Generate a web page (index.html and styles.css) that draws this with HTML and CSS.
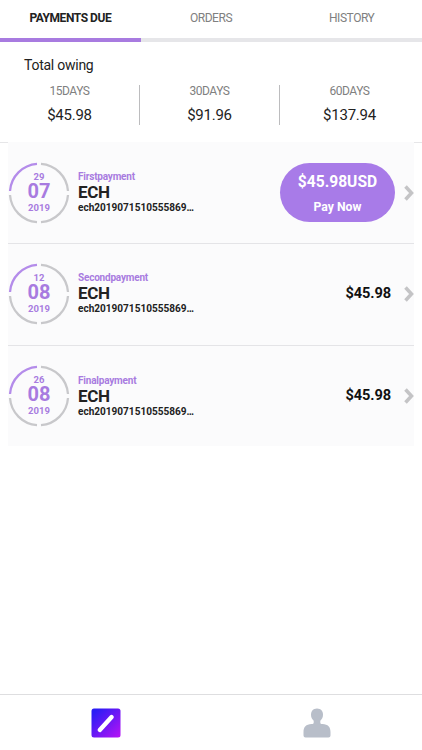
FILE: index.html
```html
<!DOCTYPE html>
<html lang="en">
<head>
    <meta charset="UTF-8">
    <meta name="viewport" content="width=device-width, initial-scale=1.0">
    <title>Payments</title>
    <link rel="stylesheet" href="styles.css">
</head>
<body>
    <nav class="tabs">
        <a class="tab active"><span>PAYMENTS DUE</span></a>
        <a class="tab"><span>ORDERS</span></a>
        <a class="tab"><span>HISTORY</span></a>
    </nav>

    <section class="owing">
        <h2>Total owing</h2>
        <div class="totals">
            <div class="total"><span class="days">15DAYS</span><span class="sum">$45.98</span></div>
            <div class="total"><span class="days">30DAYS</span><span class="sum">$91.96</span></div>
            <div class="total"><span class="days">60DAYS</span><span class="sum">$137.94</span></div>
        </div>
    </section>

    <main class="payments">
        <div class="payment">
            <div class="date">
                <svg class="ring" viewBox="0 0 62 62">
                    <path class="arc on" d="M2 29A29.2 29.2 0 0 1 29 1.9"/>
                    <path class="arc" d="M33 1.9A29.2 29.2 0 0 1 60 29M60 33A29.2 29.2 0 0 1 33 60.1M29 60.1A29.2 29.2 0 0 1 2 33"/>
                </svg>
                <span class="day">29</span>
                <span class="month">07</span>
                <span class="year">2019</span>
            </div>
            <div class="info">
                <span class="type">Firstpayment</span>
                <span class="shop">ECH</span>
                <span class="order">ech2019071510555869…</span>
            </div>
            <button class="pay"><span class="pay-sum">$45.98USD</span><span class="pay-now">Pay Now</span></button>
            <svg class="chevron" viewBox="0 0 10 16"><path d="M1.5 1.5L7.5 8L1.5 14.5"/></svg>
        </div>
        <div class="payment">
            <div class="date">
                <svg class="ring" viewBox="0 0 62 62">
                    <path class="arc on" d="M2 29A29.2 29.2 0 0 1 29 1.9"/>
                    <path class="arc" d="M33 1.9A29.2 29.2 0 0 1 60 29M60 33A29.2 29.2 0 0 1 33 60.1M29 60.1A29.2 29.2 0 0 1 2 33"/>
                </svg>
                <span class="day">12</span>
                <span class="month">08</span>
                <span class="year">2019</span>
            </div>
            <div class="info">
                <span class="type">Secondpayment</span>
                <span class="shop">ECH</span>
                <span class="order">ech2019071510555869…</span>
            </div>
            <span class="amount">$45.98</span>
            <svg class="chevron" viewBox="0 0 10 16"><path d="M1.5 1.5L7.5 8L1.5 14.5"/></svg>
        </div>
        <div class="payment">
            <div class="date">
                <svg class="ring" viewBox="0 0 62 62">
                    <path class="arc on" d="M2 29A29.2 29.2 0 0 1 29 1.9"/>
                    <path class="arc" d="M33 1.9A29.2 29.2 0 0 1 60 29M60 33A29.2 29.2 0 0 1 33 60.1M29 60.1A29.2 29.2 0 0 1 2 33"/>
                </svg>
                <span class="day">26</span>
                <span class="month">08</span>
                <span class="year">2019</span>
            </div>
            <div class="info">
                <span class="type">Finalpayment</span>
                <span class="shop">ECH</span>
                <span class="order">ech2019071510555869…</span>
            </div>
            <span class="amount">$45.98</span>
            <svg class="chevron" viewBox="0 0 10 16"><path d="M1.5 1.5L7.5 8L1.5 14.5"/></svg>
        </div>
    </main>

    <footer class="bottom-nav">
        <a class="nav-item">
            <svg width="30" height="30" viewBox="0 0 30 30">
                <defs>
                    <linearGradient id="logo" x1="0" y1="0" x2="1" y2="1">
                        <stop offset="0.1" stop-color="#2a1cf5"/>
                        <stop offset="1" stop-color="#b813f5"/>
                    </linearGradient>
                </defs>
                <rect x="0.5" y="0.5" width="29" height="29" rx="2.5" fill="url(#logo)"/>
                <path d="M8.8 21.9L20.6 9" stroke="#fff" stroke-width="4.4" stroke-linecap="round"/>
            </svg>
        </a>
        <a class="nav-item">
            <svg width="30" height="30" viewBox="0 0 30 30">
                <path fill="#b8bec9" d="M15 .5C11 .5 9 3.3 9 6.700C9 9.500 10.200 11.200 11.700 12.700V14.500C11.700 15.700 11 16 9.500 16C4 16.200 1.500 19 1.500 24V27.500Q1.500 29.500 3.500 29.500H26.500Q28.500 29.500 28.500 27.500V24C28.500 19 26 16.200 20.500 16C19 16 18.300 15.700 18.300 14.500V12.700C19.800 11.200 21 9.500 21 6.700C21 3.300 19 .5 15 .5Z"/>
            </svg>
        </a>
    </footer>
</body>
</html>
```
FILE: styles.css
```css
* {
    box-sizing: border-box;
}
body {
    margin: 0;
    height: 750px;
    display: flex;
    flex-direction: column;
    background: #fff;
    color: #222;
    font-family: Roboto, "Liberation Sans", sans-serif;
}
.tabs {
    display: flex;
    height: 42px;
}
.tab {
    flex: 1;
    padding-top: 10px;
    border-bottom: 4px solid #e6e6e9;
    color: #808080;
    font-size: 12px;
    letter-spacing: -0.45px;
    line-height: 16px;
    text-align: center;
}
.tab.active {
    border-color: #a87be0;
    color: #222;
    font-weight: bold;
}
.owing {
    height: 101px;
    padding-top: 14px;
    border-bottom: 1px solid #e6e6e8;
}
h2 {
    margin: 0 0 11px 24px;
    font-size: 14px;
    font-weight: normal;
    letter-spacing: -0.25px;
    line-height: 18px;
}
.totals {
    display: flex;
    width: 419px;
}
.total {
    flex: 1;
    height: 40px;
    display: flex;
    flex-direction: column;
    align-items: center;
    border-right: 1px solid #bcbcbe;
}
.total:last-child {
    border-right: none;
}
.days {
    color: #808080;
    font-size: 12px;
    letter-spacing: -0.45px;
    line-height: 12px;
}
.sum {
    margin-top: 9px;
    font-size: 15px;
    letter-spacing: -0.25px;
    line-height: 18px;
}
.payments {
    position: relative;
    margin: -1px 8px 0;
    background: #fbfbfc;
}
.payment {
    display: flex;
    align-items: center;
    height: 102px;
    border-bottom: 1px solid #e4e4e7;
}
.payment:nth-child(2) {
    padding-bottom: 2px;
}
.payment:last-child {
    border-bottom: none;
    height: 100px;
}
.date {
    position: relative;
    width: 62px;
    height: 62px;
    padding-top: 9px;
    display: flex;
    flex-direction: column;
    align-items: center;
    color: #a87be0;
    font-weight: bold;
}
.ring {
    position: absolute;
    left: 0;
    top: 0;
    width: 62px;
    height: 62px;
}
.arc {
    fill: none;
    stroke: #c8c8cb;
    stroke-width: 2.3;
}
.arc.on {
    stroke: #b48cea;
}
.day,
.year {
    font-size: 9.5px;
    line-height: 11px;
}
.month {
    font-size: 20px;
    line-height: 18px;
}
.year {
    margin-top: 2px;
}
.info {
    display: flex;
    flex-direction: column;
    margin-left: 8px;
    font-weight: bold;
}
.type {
    color: #a87be0;
    font-size: 10px;
    letter-spacing: -0.2px;
    line-height: 12px;
}
.shop {
    font-size: 17px;
    letter-spacing: -0.3px;
    line-height: 18px;
}
.order {
    font-size: 10.05px;
    line-height: 13px;
}
.pay {
    display: flex;
    flex-direction: column;
    align-items: center;
    width: 115px;
    height: 59px;
    margin-left: auto;
    padding: 10px 0 0;
    border: none;
    border-radius: 30px;
    background: #a87be8;
    color: #fff;
    font-family: inherit;
    font-weight: bold;
}
.pay-sum {
    font-size: 15.6px;
    line-height: 18px;
}
.pay-now {
    margin-top: 8px;
    font-size: 12.2px;
    line-height: 16px;
}
.amount {
    margin-left: auto;
    margin-right: 4px;
    padding-bottom: 2px;
    color: #111;
    font-size: 14.6px;
    font-weight: bold;
    letter-spacing: -0.1px;
}
.chevron {
    width: 10px;
    height: 16px;
    margin-left: 9px;
}
.chevron path {
    fill: none;
    stroke: #c4c4c6;
    stroke-width: 3.5;
}
.bottom-nav {
    display: flex;
    height: 56px;
    margin-top: auto;
    padding-top: 13px;
    border-top: 1px solid #dedee0;
}
.nav-item {
    flex: 1;
    text-align: center;
}
```
